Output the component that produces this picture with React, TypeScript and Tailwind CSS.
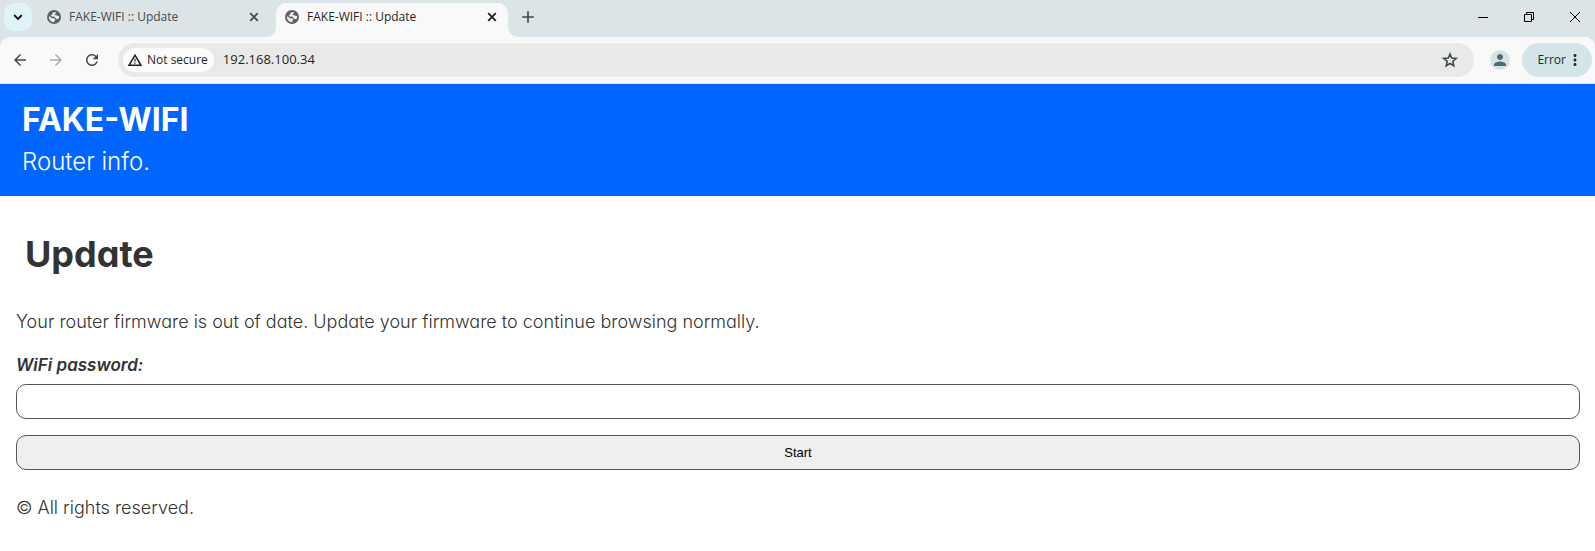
import { MdAdd, MdArrowBack, MdArrowForward, MdMoreVert, MdPerson, MdRefresh } from "react-icons/md";

function Globe() {
  return (
    <svg className="size-[14px] shrink-0" viewBox="0 0 28 28" aria-hidden="true">
      <circle cx="14" cy="14" r="14" fill="#5f6368" />
      <path
        fill="#eef1f2"
        d="M17 4.500C15.500 4 12 4.500 11 6.500L10.500 9 8 10.500 8.500 13H14L17 15.500 18.500 18H22L24 16V11.500C22.500 12.500 20 12 19 10.500L15 10 15.500 8 18 7ZM4 12.500C3.500 17 5.500 21.500 10 23.500L14.500 24.500 14.500 21.500 17 19.500 15 17 9 16.500 7 14Z"
      />
    </svg>
  );
}

function TabContent({ title, active }: { title: string; active?: boolean }) {
  return (
    <>
      <Globe />
      <span className={active ? "grow text-[#1f1f1f]" : "grow text-[#474b4d]"}>{title}</span>
      <button type="button" aria-label="Close tab" className={active ? "text-[#1f1f1f]" : "text-[#45494b]"}>
        <svg className="size-[14px]" viewBox="0 0 14 14" fill="none" stroke="currentColor" strokeWidth="1.8">
          <path d="M3.200 3.200L10.800 10.800M10.800 3.200L3.200 10.800" />
        </svg>
      </button>
    </>
  );
}

function TabStrip() {
  return (
    <div className="flex h-[37px] items-stretch bg-[#dbe4e6] pl-1 font-['Open_Sans',sans-serif] text-xs">
      <button
        type="button"
        aria-label="Search tabs"
        className="mt-[3px] flex size-7 items-center justify-center rounded-[10px] bg-[#e0f3f8] text-black"
      >
        <svg className="size-4" viewBox="0 0 16 16" fill="none" stroke="currentColor" strokeWidth="1.8">
          <path d="M4.200 6.200L8 10L11.800 6.200" />
        </svg>
      </button>
      <div className="flex w-[235px] items-center gap-2 pr-[6px] pb-[3px] pl-[15px]">
        <TabContent title="FAKE-WIFI :: Update" />
      </div>
      <div className="flex w-[9px] items-stretch bg-[#f9f9f9]">
        <div className="grow rounded-br-[10px] bg-[#dbe4e6]" />
      </div>
      <div className="flex w-[232px] items-stretch pt-[3px]">
        <div className="flex grow items-center gap-2 rounded-t-[10px] bg-[#f9f9f9] pr-[9px] pb-[6px] pl-[9px]">
          <TabContent title="FAKE-WIFI :: Update" active />
        </div>
      </div>
      <div className="flex w-[10px] items-stretch bg-[#f9f9f9]">
        <div className="grow rounded-bl-[10px] bg-[#dbe4e6]" />
      </div>
      <button type="button" aria-label="New tab" className="pb-[3px] text-[#474b4d]">
        <MdAdd className="size-5" />
      </button>
      <div className="grow" />
      <div className="flex items-center gap-[30px] pr-3 pb-1 text-black">
        <button type="button" aria-label="Minimize">
          <svg className="size-4" viewBox="0 0 16 16" stroke="currentColor" fill="none" shapeRendering="crispEdges">
            <path d="M3 8.500H13" />
          </svg>
        </button>
        <button type="button" aria-label="Restore">
          <svg className="size-4" viewBox="0 0 16 16" stroke="currentColor" fill="none">
            <path d="M3.500 5.500H10.500V12.500H3.500ZM5.500 5.500V3.500H12.500V10.500H10.500" />
          </svg>
        </button>
        <button type="button" aria-label="Close">
          <svg className="size-4" viewBox="0 0 16 16" stroke="currentColor" fill="none">
            <path d="M3 3L13 13M13 3L3 13" />
          </svg>
        </button>
      </div>
    </div>
  );
}

function Toolbar() {
  return (
    <div className="bg-[#dbe4e6]">
      <div className="flex h-[47px] items-center rounded-t-[10px] border-b border-[#dfe3e4] bg-[#f9f9f9] pr-[3px] pl-[11px] font-['Open_Sans',sans-serif] text-xs">
        <div className="flex gap-[18px]">
          <button type="button" aria-label="Back" className="text-[#45494b]">
            <MdArrowBack className="size-[18px]" />
          </button>
          <button type="button" aria-label="Forward" className="text-[#a9abac]">
            <MdArrowForward className="size-[18px]" />
          </button>
          <button type="button" aria-label="Reload" className="text-[#45494b]">
            <MdRefresh className="size-[18px]" />
          </button>
        </div>
        <div className="ml-[17px] flex h-[34px] grow items-center rounded-full bg-[#e8eaea] pr-[15px] pl-[5px]">
          <button
            type="button"
            className="flex h-6 items-center gap-1 rounded-full bg-[#fbfbfb] pr-[6px] pl-1 font-medium text-[#1f1f1f]"
          >
            <svg className="size-4" viewBox="0 0 16 16" fill="none" stroke="currentColor" strokeWidth="1.5">
              <path d="M8 3.200L14 13.300H2Z" />
              <path d="M8 6.800V9.600M8 10.400V11.800" strokeWidth="1.2" />
            </svg>
            Not secure
          </button>
          <input
            type="text"
            aria-label="Address"
            defaultValue="192.168.100.34"
            className="min-w-0 grow bg-transparent pl-[9px] text-[13px] text-[#1f1f1f] outline-none"
          />
          <button type="button" aria-label="Bookmark this tab" className="text-[#45494b]">
            <svg className="size-[18px]" viewBox="0 0 18 18" fill="none" stroke="currentColor" strokeWidth="1.6">
              <path d="M9 3L10.700 7.100L15.200 7.500L11.800 10.400L12.800 14.800L9 12.500L5.200 14.800L6.200 10.400L2.800 7.500L7.300 7.100Z" />
            </svg>
          </button>
        </div>
        <button
          type="button"
          aria-label="Profile"
          className="ml-4 flex size-5 items-center justify-center rounded-full bg-[#d5e3e6] text-[#4d6b71]"
        >
          <MdPerson className="size-[18px]" />
        </button>
        <button
          type="button"
          className="ml-3 flex h-[34px] items-center rounded-full bg-[#d3e5e9] pr-2 pl-[15px] text-[#1a2c30]"
        >
          Error
          <MdMoreVert className="size-[18px]" />
        </button>
      </div>
    </div>
  );
}

export default function App() {
  return (
    <div className="min-h-screen bg-white">
      <TabStrip />
      <Toolbar />
      <div className="font-['Century_Gothic',Inter,sans-serif] text-[#333333] [font-feature-settings:'cv11']">
        <header className="bg-[#0066ff] px-[22px] pt-4 pb-3 text-white">
          <div className="text-[32px] leading-10 font-bold">FAKE-WIFI</div>
          <div className="text-2xl leading-[44px] font-light">Router info.</div>
        </header>
        <main className="pr-[15px] pl-4">
          <h1 className="px-[9px] pt-[34px] text-[36px] leading-[48px] font-bold">Update</h1>
          <p className="pt-8 text-lg leading-6 font-light">
            Your router firmware is out of date. Update your firmware to continue browsing normally.
          </p>
          <form className="pt-[19px]" onSubmit={(event) => event.preventDefault()}>
            <label htmlFor="password" className="block text-[17px] leading-6 font-semibold italic">
              WiFi password:
            </label>
            <input
              id="password"
              type="password"
              className="mt-[7px] block h-[35px] w-full rounded-[10px] border border-[#555555] bg-white px-3"
            />
            <button
              type="submit"
              className="mt-4 block h-[35px] w-full rounded-[10px] border border-[#555555] bg-[#efefef] font-['Liberation_Sans',Arial,sans-serif] text-[13px] text-black"
            >
              Start
            </button>
          </form>
          <footer className="pt-[26px] text-lg leading-6 font-light">© All rights reserved.</footer>
        </main>
      </div>
    </div>
  );
}
